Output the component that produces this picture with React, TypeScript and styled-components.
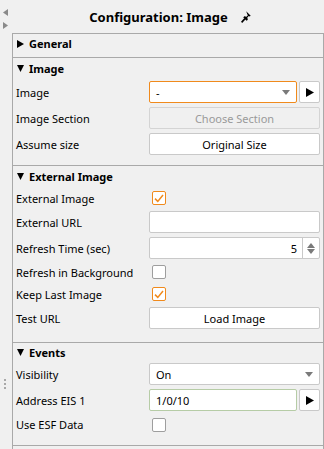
import styled, { createGlobalStyle } from "styled-components";

const GlobalStyle = createGlobalStyle`
  html, body {
    margin: 0;
    padding: 0;
    background: #f0f0f0;
  }
  body {
    font-family: "Noto Sans", "Open Sans", sans-serif;
    font-size: 11px;
    color: #000;
  }
`;

const Shell = styled.div`
  display: flex;
  width: 324px;
  height: 449px;
  overflow: hidden;
`;

const Rail = styled.div`
  width: 12px;
  display: flex;
  flex-direction: column;
  align-items: flex-start;
  padding: 9px 0 0 3px;
  box-sizing: border-box;
  gap: 6px;
`;

const Grip = styled.div`
  margin-top: 344px;
  margin-left: 1px;
  display: flex;
  flex-direction: column;
  gap: 2px;
  span {
    width: 2px;
    height: 2px;
    background: #a8a8a8;
  }
`;

const Main = styled.div`
  flex: 1;
  display: flex;
  flex-direction: column;
`;

const TitleBar = styled.div`
  height: 33px;
  display: flex;
  align-items: center;
  justify-content: center;
  gap: 13px;
  font-size: 13px;
  font-weight: 700;
  padding-left: 4px;
`;

const Panel = styled.div`
  flex: 1;
  border: 1px solid #a9a9a9;
  border-bottom: none;
`;

const Section = styled.div<{ $pad: number }>`
  border-bottom: 1px solid #a9a9a9;
  padding-bottom: ${(p) => p.$pad}px;
`;

const Header = styled.div<{ $h: number }>`
  height: ${(p) => p.$h}px;
  display: flex;
  align-items: center;
  gap: 5px;
  padding-left: 4px;
  font-weight: 700;
  font-size: 11px;
`;

const Row = styled.div<{ $h: number }>`
  display: grid;
  grid-template-columns: 133px 1fr;
  align-items: center;
  height: ${(p) => p.$h}px;
  padding: 0 3px 0 3px;
`;

const Label = styled.div`
  white-space: nowrap;
`;

const Field = styled.div`
  display: flex;
  gap: 2px;
  height: 22px;
`;

const Box = styled.div<{ $border?: string }>`
  flex: 1;
  display: flex;
  align-items: center;
  box-sizing: border-box;
  height: 22px;
  background: #fff;
  border: 1px solid ${(p) => p.$border ?? "#c9c9c9"};
  border-radius: 2px;
  padding: 0 6px;
  font-size: 11px;
`;

const Value = styled.span<{ $right?: boolean }>`
  flex: 1;
  text-align: ${(p) => (p.$right ? "right" : "left")};
`;

const Spinner = styled.div`
  align-self: stretch;
  width: 16px;
  margin: -1px -6px -1px 5px;
  border-left: 1px solid #c9c9c9;
  display: flex;
  flex-direction: column;
  align-items: center;
  justify-content: center;
  gap: 1px;
`;

const Button = styled.div<{ $disabled?: boolean }>`
  flex: 1;
  display: flex;
  align-items: center;
  justify-content: center;
  box-sizing: border-box;
  height: 22px;
  background: ${(p) => (p.$disabled ? "#f0f0f0" : "#fff")};
  color: ${(p) => (p.$disabled ? "#9a9a9a" : "#000")};
  border: 1px solid ${(p) => (p.$disabled ? "#d4d4d4" : "#c9c9c9")};
  border-radius: 2px;
  font-size: 11px;
`;

const PlayButton = styled.div`
  width: 21px;
  box-sizing: border-box;
  display: flex;
  align-items: center;
  justify-content: center;
  background: #fff;
  border: 1px solid #c9c9c9;
  border-radius: 2px;
`;

const Check = styled.div<{ $on?: boolean }>`
  width: 14px;
  height: 14px;
  box-sizing: border-box;
  margin-left: 3px;
  background: #fff;
  border: 1px solid ${(p) => (p.$on ? "#f08a1c" : "#9e9e9e")};
  border-radius: 2px;
  display: flex;
  align-items: center;
  justify-content: center;
`;

type Dir = "r" | "d" | "l" | "u";

const Tri = ({ dir, w = 7, h, color = "#000" }: { dir: Dir; w?: number; h?: number; color?: string }) => {
  const vertical = dir === "d" || dir === "u";
  const height = h ?? (vertical ? Math.round(w * 0.6) : w);
  const pts = {
    r: `0,0 ${w},${height / 2} 0,${height}`,
    l: `${w},0 0,${height / 2} ${w},${height}`,
    d: `0,0 ${w},0 ${w / 2},${height}`,
    u: `0,${height} ${w},${height} ${w / 2},0`,
  }[dir];
  return (
    <svg width={w} height={height} viewBox={`0 0 ${w} ${height}`}>
      <polygon points={pts} fill={color} />
    </svg>
  );
};

const Pin = () => (
  <svg width="10" height="12" viewBox="0 0 10 12">
    <path
      d="M5.2 0.3 L9.7 4.8 L8.6 5.6 L7.8 5.1 L6.3 6.6 L6.8 8.7 L5.6 9.7 L2.3 6.4 L3.3 5.3 L5.4 5.8 L6.9 4.3 L6.4 3.5 Z"
      fill="#000"
    />
    <path d="M4 7.6 L0.6 11.4" stroke="#000" strokeWidth="1.6" />
  </svg>
);

const Tick = () => (
  <svg width="10" height="9" viewBox="0 0 10 9">
    <path d="M1 4.6 L3.8 7.4 L9 1" fill="none" stroke="#f08a1c" strokeWidth="1.5" />
  </svg>
);

const SelectArrow = () => <Tri dir="d" w={8} h={5} color="#7a7a7a" />;

export default function App() {
  return (
    <>
      <GlobalStyle />
      <Shell>
        <Rail>
          <Tri dir="l" w={5} h={7} color="#8a8a8a" />
          <Tri dir="r" w={5} h={7} color="#8a8a8a" />
          <Grip>
            <span />
            <span />
            <span />
          </Grip>
        </Rail>
        <Main>
          <TitleBar>
            <span>Configuration: Image</span>
            <Pin />
          </TitleBar>
          <Panel>
            <Section $pad={4}>
              <Header $h={19}>
                <Tri dir="r" w={7} h={8} />
                General
              </Header>
            </Section>

            <Section $pad={8}>
              <Header $h={21}>
                <Tri dir="d" w={7} h={7} />
                Image
              </Header>
              <Row $h={26}>
                <Label>Image</Label>
                <Field>
                  <Box $border="#f08a1c">
                    <Value>-</Value>
                    <SelectArrow />
                  </Box>
                  <PlayButton>
                    <Tri dir="r" w={8} h={9} />
                  </PlayButton>
                </Field>
              </Row>
              <Row $h={26}>
                <Label>Image Section</Label>
                <Field>
                  <Button $disabled>Choose Section</Button>
                </Field>
              </Row>
              <Row $h={26}>
                <Label>Assume size</Label>
                <Field>
                  <Button>Original Size</Button>
                </Field>
              </Row>
            </Section>

            <Section $pad={11}>
              <Header $h={21}>
                <Tri dir="d" w={7} h={7} />
                External Image
              </Header>
              <Row $h={22}>
                <Label>External Image</Label>
                <Check $on>
                  <Tick />
                </Check>
              </Row>
              <Row $h={26}>
                <Label>External URL</Label>
                <Field>
                  <Box />
                </Field>
              </Row>
              <Row $h={26}>
                <Label>Refresh Time (sec)</Label>
                <Field>
                  <Box>
                    <Value $right>5</Value>
                    <Spinner>
                      <Tri dir="u" w={8} h={5} color="#7a7a7a" />
                      <Tri dir="d" w={8} h={5} color="#7a7a7a" />
                    </Spinner>
                  </Box>
                </Field>
              </Row>
              <Row $h={22}>
                <Label>Refresh in Background</Label>
                <Check />
              </Row>
              <Row $h={22}>
                <Label>Keep Last Image</Label>
                <Check $on>
                  <Tick />
                </Check>
              </Row>
              <Row $h={26}>
                <Label>Test URL</Label>
                <Field>
                  <Button>Load Image</Button>
                </Field>
              </Row>
            </Section>

            <Section $pad={9}>
              <Header $h={18}>
                <Tri dir="d" w={7} h={7} />
                Events
              </Header>
              <Row $h={26}>
                <Label>Visibility</Label>
                <Field>
                  <Box>
                    <Value>On</Value>
                    <SelectArrow />
                  </Box>
                </Field>
              </Row>
              <Row $h={26}>
                <Label>Address EIS 1</Label>
                <Field>
                  <Box $border="#b6cca6">
                    <Value>1/0/10</Value>
                  </Box>
                  <PlayButton>
                    <Tri dir="r" w={8} h={9} />
                  </PlayButton>
                </Field>
              </Row>
              <Row $h={23}>
                <Label>Use ESF Data</Label>
                <Check />
              </Row>
            </Section>
          </Panel>
        </Main>
      </Shell>
    </>
  );
}
